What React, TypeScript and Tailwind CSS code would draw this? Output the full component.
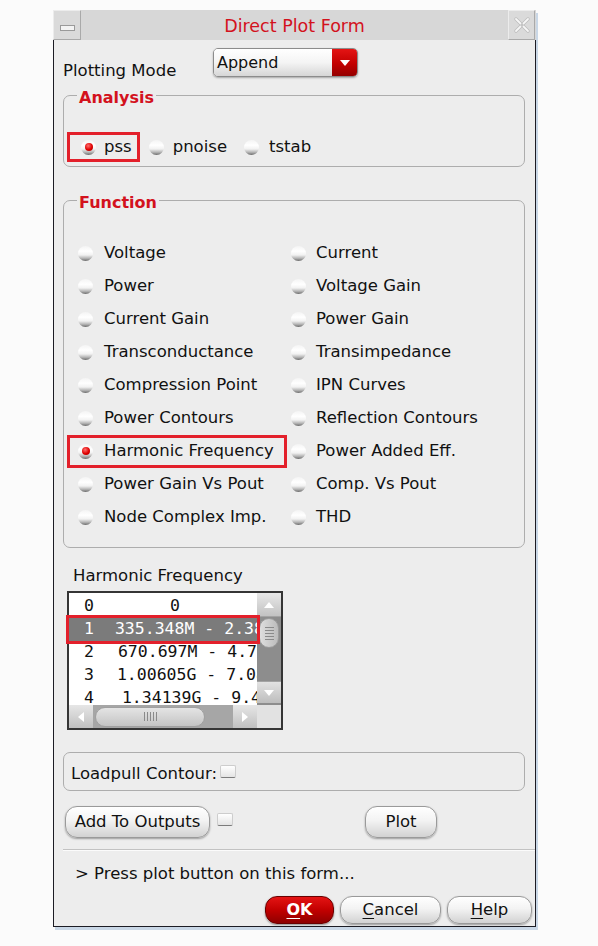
import React from 'react'

const SANS = "font-['DejaVu_Sans',sans-serif]"
const MONO = "font-['DejaVu_Sans_Mono',monospace]"

function Radio({ on = false }: { on?: boolean }) {
  return (
    <span className="flex h-[15px] w-[15px] shrink-0 items-center justify-center rounded-full bg-[linear-gradient(180deg,#f4f4f4_0%,#ffffff_35%,#f2f2f2_60%,#b4b4b4_82%,#6a6a6a_100%)]">
      {on && (
        <span className="mb-[1px] h-[8px] w-[8px] rounded-full bg-[radial-gradient(circle_at_40%_35%,#ff7070_0%,#e00000_55%,#9a0000_100%)]" />
      )}
    </span>
  )
}

function Check() {
  return (
    <span className="inline-block h-[13px] w-[16px] shrink-0 rounded-[2px] border border-[#cdcdcd] border-b-[#7c7c7c] bg-[linear-gradient(180deg,#ffffff,#e4e4e4)]" />
  )
}

function Btn({ children, className = '' }: { children: React.ReactNode; className?: string }) {
  return (
    <button
      className={`flex items-center justify-center rounded-[12px] border border-[#9a9a9a] bg-[linear-gradient(180deg,#ffffff_0%,#f3f3f3_45%,#d2d2d2_100%)] shadow-[0_1px_2px_rgba(0,0,0,0.35)] text-[16.5px] text-[#111] ${className}`}
    >
      {children}
    </button>
  )
}

const leftFns = [
  'Voltage',
  'Power',
  'Current Gain',
  'Transconductance',
  'Compression Point',
  'Power Contours',
  'Harmonic Frequency',
  'Power Gain Vs Pout',
  'Node Complex Imp.',
]
const rightFns = [
  'Current',
  'Voltage Gain',
  'Power Gain',
  'Transimpedance',
  'IPN Curves',
  'Reflection Contours',
  'Power Added Eff.',
  'Comp. Vs Pout',
  'THD',
]

const harmonics = [
  { i: '0', v: '0', gap: 'ml-[76px]' },
  { i: '1', v: '335.348M - 2.38', gap: 'ml-[21px]', sel: true },
  { i: '2', v: '670.697M - 4.77', gap: 'ml-[24px]' },
  { i: '3', v: '1.00605G - 7.08', gap: 'ml-[23px]' },
  { i: '4', v: '1.34139G - 9.45', gap: 'ml-[28px]' },
]

function Arrow({ dir }: { dir: 'up' | 'down' | 'left' | 'right' }) {
  const d = {
    up: 'M6 1 L11 7 L1 7 Z',
    down: 'M1 1 L11 1 L6 7 Z',
    left: 'M1 6 L7 1 L7 11 Z',
    right: 'M1 1 L7 6 L1 11 Z',
  }[dir]
  const vertical = dir === 'up' || dir === 'down'
  return (
    <svg width={vertical ? 12 : 8} height={vertical ? 8 : 12} viewBox={vertical ? '0 0 12 8' : '0 0 8 12'}>
      <path d={d} fill="#ffffff" />
    </svg>
  )
}

function HarmonicList() {
  return (
    <div className="ml-[4px] mt-[5px] flex h-[139px] w-[216px] flex-col border-2 border-[#353535] bg-white">
      <div className="flex h-[112px]">
        <div className={`min-w-0 flex-1 pt-[2px] text-[16.5px] ${MONO}`}>
          {harmonics.map((r) => (
            <div
              key={r.i}
              className={`flex h-[23px] w-full items-center overflow-hidden whitespace-nowrap pl-[15px] ${
                r.sel
                  ? 'relative z-10 bg-[#7b7b7b] text-white outline-3 outline-offset-[0px] outline-[#e3202b]'
                  : 'text-[#111]'
              }`}
            >
              <span className="shrink-0">{r.i}</span>
              <span className={`shrink-0 ${r.gap}`}>{r.v}</span>
            </div>
          ))}
        </div>
        <div className="flex w-[24px] shrink-0 flex-col bg-[#8d8d8d]">
          <div className="flex h-[24px] items-center justify-center border-b border-[#a3a3a3] bg-[linear-gradient(180deg,#e8e8e8,#c2c2c2)]">
            <Arrow dir="up" />
          </div>
          <div className="mx-[2px] mt-[1px] flex h-[30px] flex-col items-center justify-center gap-[2px] rounded-[10px] border border-[#9c9c9c] bg-[linear-gradient(90deg,#dedede,#bcbcbc)]">
            <span className="h-px w-[9px] bg-[#8a8a8a]" />
            <span className="h-px w-[9px] bg-[#8a8a8a]" />
            <span className="h-px w-[9px] bg-[#8a8a8a]" />
            <span className="h-px w-[9px] bg-[#8a8a8a]" />
            <span className="h-px w-[9px] bg-[#8a8a8a]" />
          </div>
          <div className="flex-1" />
          <div className="mb-[2px] flex h-[22px] items-center justify-center border-t border-[#a3a3a3] bg-[linear-gradient(180deg,#e2e2e2,#bdbdbd)]">
            <Arrow dir="down" />
          </div>
        </div>
      </div>
      <div className="flex h-[23px]">
        <div className="flex min-w-0 flex-1 items-center bg-[#a6a6a6]">
          <div className="flex h-full w-[24px] shrink-0 items-center justify-center bg-[linear-gradient(180deg,#e6e6e6,#c0c0c0)]">
            <Arrow dir="left" />
          </div>
          <div className="ml-[2px] flex h-[20px] w-[110px] shrink-0 items-center justify-center gap-[2px] rounded-full border border-[#a0a0a0] bg-[linear-gradient(180deg,#e4e4e4,#c4c4c4)]">
            <span className="h-[9px] w-px bg-[#8a8a8a]" />
            <span className="h-[9px] w-px bg-[#8a8a8a]" />
            <span className="h-[9px] w-px bg-[#8a8a8a]" />
            <span className="h-[9px] w-px bg-[#8a8a8a]" />
            <span className="h-[9px] w-px bg-[#8a8a8a]" />
          </div>
          <div className="flex-1" />
          <div className="flex h-full w-[24px] shrink-0 items-center justify-center bg-[linear-gradient(180deg,#e6e6e6,#c0c0c0)]">
            <Arrow dir="right" />
          </div>
        </div>
        <div className="w-[24px] shrink-0 bg-[#e2e2e2]" />
      </div>
    </div>
  )
}

export default function App() {
  return (
    <div className={`min-h-screen bg-[#fbfbfb] pl-[53px] pt-[10px] text-[#111] ${SANS}`}>
      <div className="w-[483px] shadow-[2px_3px_0_#c9d7e6]">
        {/* Title bar */}
        <div className="flex h-[30px] bg-[#d7d7d7]">
          <div className="flex w-[28px] items-end justify-center border border-[#a9a9a9] border-l-[#ececec] border-t-[#ececec] bg-[#dadada] pb-[8px]">
            <span className="h-[6px] w-[15px] border border-[#9a9a9a] bg-[#f3f3f3]" />
          </div>
          <div className="flex flex-1 items-center justify-center pt-[2px] text-[17.5px] text-[#d3121d]">
            Direct Plot Form
          </div>
          <div className="mr-[1px] flex w-[27px] items-center justify-center border border-[#a9a9a9] border-l-[#ececec] border-t-[#ececec] bg-[#dadada]">
            <svg width="18" height="18" viewBox="0 0 18 18">
              <path d="M3 3 L7.5 7.5 M15 3 L10.5 7.5 M3 15 L7.5 10.5 M15 15 L10.5 10.5" stroke="#bcbcbc" strokeWidth="3.4" strokeLinecap="round" />
              <path d="M3 3 L7.5 7.5 M15 3 L10.5 7.5 M3 15 L7.5 10.5 M15 15 L10.5 10.5" stroke="#f6f6f6" strokeWidth="1.8" strokeLinecap="round" />
            </svg>
          </div>
        </div>

        {/* Body */}
        <div className="flex flex-col border-x border-b border-[#1c1c24] bg-[#ededed] pb-[2px] pl-[9px] pr-[10px]">
          {/* Plotting mode */}
          <div className="mt-[8px] flex h-[29px] items-start">
            <span className="mt-[13px] w-[150px] text-[16.5px] leading-[20px]">Plotting Mode</span>
            <div className="flex h-[29px] w-[145px] overflow-hidden rounded-[5px] border border-[#8c8c8c] shadow-[0_1px_2px_rgba(0,0,0,0.3)]">
              <div className="flex flex-1 items-center bg-[linear-gradient(180deg,#ffffff_0%,#f4f4f4_50%,#d6d6d6_100%)] pl-[3px] pt-[1px] text-[16px]">
                Append
              </div>
              <div className="flex w-[25px] items-center justify-center bg-[linear-gradient(180deg,#e41414_0%,#c20000_55%,#940000_100%)]">
                <svg width="10" height="6" viewBox="0 0 10 6">
                  <path d="M0 0 L10 0 L5 6 Z" fill="#ffffff" />
                </svg>
              </div>
            </div>
          </div>

          {/* Analysis */}
          <fieldset className="mt-[6px] rounded-[7px] border border-[#adadad] px-[3px] pb-[4px] pt-[24px]">
            <legend className="ml-[10px] px-[2px] pt-[6px] text-[16px] font-bold leading-[18px] text-[#d3121d]">
              Analysis
            </legend>
            <div className="flex h-[31px] items-center pt-[1px] text-[16.5px]">
              <div className="flex h-full items-center gap-[8px] pl-[14px] pr-[8px] outline-3 outline-offset-[-3px] outline-[#e3202b]">
                <Radio on />
                <span>pss</span>
              </div>
              <div className="ml-[9px] flex items-center gap-[9px]">
                <Radio />
                <span>pnoise</span>
              </div>
              <div className="ml-[17px] flex items-center gap-[10px]">
                <Radio />
                <span>tstab</span>
              </div>
            </div>
          </fieldset>

          {/* Function */}
          <fieldset className="mt-[21px] rounded-[7px] border border-[#adadad] px-[3px] pb-[13px] pt-[25px]">
            <legend className="ml-[10px] px-[2px] pt-[6px] text-[16px] font-bold leading-[18px] text-[#d3121d]">
              Function
            </legend>
            <div className="grid grid-cols-[220px_1fr] text-[16.5px]">
              {leftFns.map((name, i) => (
                <React.Fragment key={name}>
                  <div
                    className={`flex h-[33px] items-center gap-[11px] pl-[11px] ${
                      name === 'Harmonic Frequency' ? 'outline-3 outline-offset-[-3px] outline-[#e3202b]' : ''
                    }`}
                  >
                    <Radio on={name === 'Harmonic Frequency'} />
                    <span className="whitespace-nowrap">{name}</span>
                  </div>
                  <div className="flex h-[33px] items-center gap-[10px] pl-[4px]">
                    <Radio />
                    <span className="whitespace-nowrap">{rightFns[i]}</span>
                  </div>
                </React.Fragment>
              ))}
            </div>
          </fieldset>

          {/* Harmonic frequency list */}
          <div className="ml-[10px] mt-[18px] text-[16.5px] leading-[20px]">Harmonic Frequency</div>
          <HarmonicList />

          {/* Loadpull */}
          <div className="mt-[22px] flex h-[39px] items-center rounded-[7px] border border-[#adadad] pl-[7px] pt-[6px] text-[16.5px]">
            <span>Loadpull Contour:</span>
            <span className="ml-[3px] -mt-[2px]">
              <Check />
            </span>
          </div>

          {/* Output buttons */}
          <div className="mt-[15px] flex h-[32px] items-start">
            <Btn className="ml-[2px] h-[32px] w-[145px]">Add To Outputs</Btn>
            <span className="ml-[7px] mt-[3px]">
              <Check />
            </span>
            <Btn className="ml-[132px] h-[32px] w-[72px]">Plot</Btn>
          </div>

          {/* Separator */}
          <div className="-mr-[10px] mt-[11px] h-[2px] border-t border-b border-t-[#c2c2c2] border-b-[#fbfbfb]" />

          {/* Status */}
          <div className="ml-[12px] mt-[13px] text-[16.5px] leading-[20px]">&gt; Press plot button on this form...</div>

          {/* Dialog buttons */}
          <div className="-mr-[7px] mt-[12px] flex justify-end gap-[6px]">
            <button className="flex h-[28px] w-[69px] items-center justify-center rounded-[12px] border border-[#6a0000] bg-[linear-gradient(180deg,#e41414_0%,#c20000_50%,#8e0000_100%)] text-[16px] font-bold text-white shadow-[0_1px_2px_rgba(0,0,0,0.4)]">
              <span className="underline underline-offset-[3px]">O</span>K
            </button>
            <Btn className="h-[28px] w-[101px]">
              <span className="underline underline-offset-[3px]">C</span>ancel
            </Btn>
            <Btn className="h-[28px] w-[85px]">
              <span className="underline underline-offset-[3px]">H</span>elp
            </Btn>
          </div>
        </div>
      </div>
    </div>
  )
}
